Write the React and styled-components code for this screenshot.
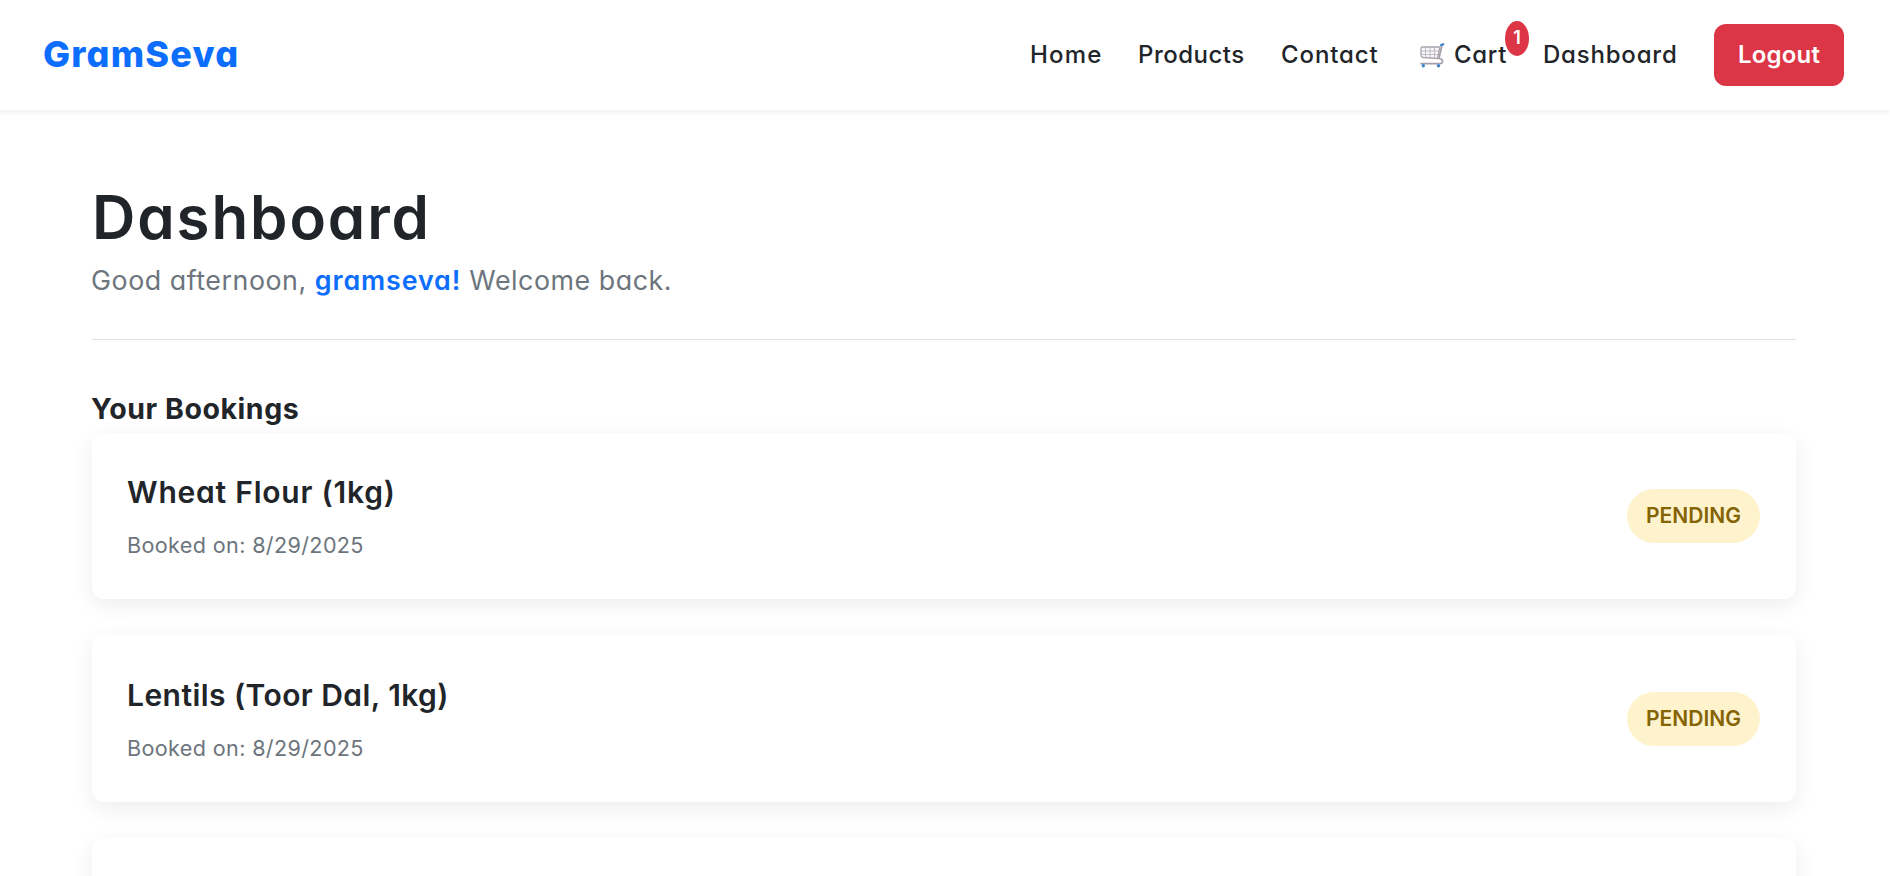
import React from 'react';
import styled, { createGlobalStyle } from 'styled-components';

const GlobalStyle = createGlobalStyle`
  * { box-sizing: border-box; }
  html, body { margin: 0; height: 876px; overflow: hidden; }
  body {
    background: #fff;
    color: #212529;
    font-family: Inter, "Open Sans", "Liberation Sans", sans-serif;
    font-feature-settings: "cv11";
    font-optical-sizing: none;
  }
`;

const Page = styled.div`
  height: 876px;
  overflow: hidden;
`;

const Navbar = styled.nav`
  display: flex;
  align-items: center;
  justify-content: space-between;
  height: 110px;
  padding: 0 46px 0 43px;
  background: #fff;
  box-shadow: 0 3px 6px rgba(0, 0, 0, 0.06);
`;

const Brand = styled.a`
  padding-bottom: 2px;
  color: #0d6efd;
  font-size: 36px;
  font-weight: 800;
  line-height: 54px;
  letter-spacing: 1.2px;
`;

const NavLinks = styled.div`
  display: flex;
  align-items: center;
  gap: 36px;
`;

const NavLink = styled.a`
  position: relative;
  display: flex;
  align-items: center;
  width: ${(p) => p.$width}px;
  padding-left: 1px;
  font-size: 24px;
  font-weight: 480;
  line-height: 36px;
  white-space: nowrap;
  letter-spacing: ${(p) => p.$tracking}px;
`;

const CartGlyph = styled.svg`
  width: 26px;
  height: 26px;
  margin: 0 9px 0 2px;
  flex: none;
`;

const CartCount = styled.span`
  position: absolute;
  top: -16px;
  right: -23px;
  width: 24px;
  height: 35px;
  border-radius: 50%;
  background: #dc3545;
  color: #fff;
  font-size: 18px;
  font-weight: 600;
  line-height: 33px;
  text-align: center;
  letter-spacing: 0;
`;

const LogoutButton = styled.button`
  width: 130px;
  height: 62px;
  padding: 0 0 2px;
  border: 0;
  border-radius: 12px;
  background: #dc3545;
  color: #fff;
  font: inherit;
  font-optical-sizing: none;
  font-feature-settings: "cv11";
  font-size: 24px;
  font-weight: 600;
  letter-spacing: 0.2px;
`;

const Main = styled.main`
  padding: 75px 94px 0 92px;
`;

const PageHeader = styled.header`
  height: 155px;
  border-bottom: 1px solid #dee2e6;
`;

const Title = styled.h1`
  margin: 0;
  font-size: 60px;
  font-weight: 630;
  line-height: 65px;
  letter-spacing: 1.9px;
`;

const Greeting = styled.p`
  margin: 10px 0 0 -1px;
  color: #6c757d;
  font-size: 26.8px;
  line-height: 40px;
  letter-spacing: 0.54px;
`;

const UserName = styled.strong`
  color: #0d6efd;
  font-weight: 600;
  letter-spacing: 0.9px;
`;

const SectionTitle = styled.h2`
  margin: 51px 0 6.5px -1px;
  font-size: 28.5px;
  font-weight: 700;
  line-height: 35px;
  letter-spacing: 0.55px;
`;

const BookingList = styled.div`
  display: flex;
  flex-direction: column;
  gap: 36px;
`;

const BookingCard = styled.article`
  display: flex;
  align-items: center;
  justify-content: space-between;
  height: 166.7px;
  padding: 0 36px;
  border-radius: 12px;
  background: #fff;
  box-shadow: 0 6px 22px rgba(0, 0, 0, 0.075);
`;

const BookingInfo = styled.div`
  padding-top: 5px;
`;

const BookingName = styled.h3`
  margin: 0 0 17px -1px;
  font-size: 30px;
  font-weight: 620;
  line-height: 36px;
  letter-spacing: ${(p) => p.$tracking}px;
`;

const BookingDate = styled.p`
  margin: 0 0 0 -1px;
  color: #6c757d;
  font-size: 21.6px;
  line-height: 36px;
  letter-spacing: 0.35px;
`;

const StatusBadge = styled.span`
  width: 133px;
  height: 54px;
  border-radius: 27px;
  background: #fff3cd;
  color: #856404;
  font-size: 21px;
  font-weight: 600;
  line-height: 53px;
  text-align: center;
`;

const CartIcon = () => (
  <CartGlyph viewBox="0 0 26 26" fill="none">
    <path d="M2.5 5H21L18.5 16.5L4.5 15.5Q2 15 2 13V6.5Q2 5 3.5 5Z" fill="#f8f7fa" stroke="#aaa3ad" strokeWidth="1.3" />
    <path d="M6.5 5V16M11 5V16M15.5 5V16M2 9H20M2 12.5H19" stroke="#b9b4bc" strokeWidth="0.9" />
    <path d="M23 3L20 16.5Q24 17 23.5 20Q23 21.7 21 21.7H2" stroke="#a59da9" strokeWidth="1.7" strokeLinecap="round" />
    <path d="M22 3L24.3 2.2" stroke="#3f83cf" strokeWidth="2.2" strokeLinecap="round" />
    <circle cx="4.3" cy="23.7" r="1.7" fill="#3f83cf" />
    <circle cx="19.5" cy="23.7" r="1.7" fill="#3f83cf" />
  </CartGlyph>
);

const bookings = [
  { name: 'Wheat Flour (1kg)', date: '8/29/2025', tracking: 0.78 },
  { name: 'Lentils (Toor Dal, 1kg)', date: '8/29/2025', tracking: 0.44 },
];

export default function App() {
  return (
    <Page>
      <GlobalStyle />
      <Navbar>
        <Brand>GramSeva</Brand>
        <NavLinks>
          <NavLink $width={72} $tracking={1.2}>Home</NavLink>
          <NavLink $width={107} $tracking={0.5}>Products</NavLink>
          <NavLink $width={100} $tracking={0.9}>Contact</NavLink>
          <NavLink $width={90} $tracking={0.7}>
            <CartIcon />
            Cart
            <CartCount>1</CartCount>
          </NavLink>
          <NavLink $width={136} $tracking={0.8}>Dashboard</NavLink>
          <LogoutButton>Logout</LogoutButton>
        </NavLinks>
      </Navbar>
      <Main>
        <PageHeader>
          <Title>Dashboard</Title>
          <Greeting>
            Good afternoon, <UserName>gramseva!</UserName> Welcome back.
          </Greeting>
        </PageHeader>
        <SectionTitle>Your Bookings</SectionTitle>
        <BookingList>
          {bookings.map((b) => (
            <BookingCard key={b.name}>
              <BookingInfo>
                <BookingName $tracking={b.tracking}>{b.name}</BookingName>
                <BookingDate>Booked on: {b.date}</BookingDate>
              </BookingInfo>
              <StatusBadge>PENDING</StatusBadge>
            </BookingCard>
          ))}
          <BookingCard />
        </BookingList>
      </Main>
    </Page>
  );
}
